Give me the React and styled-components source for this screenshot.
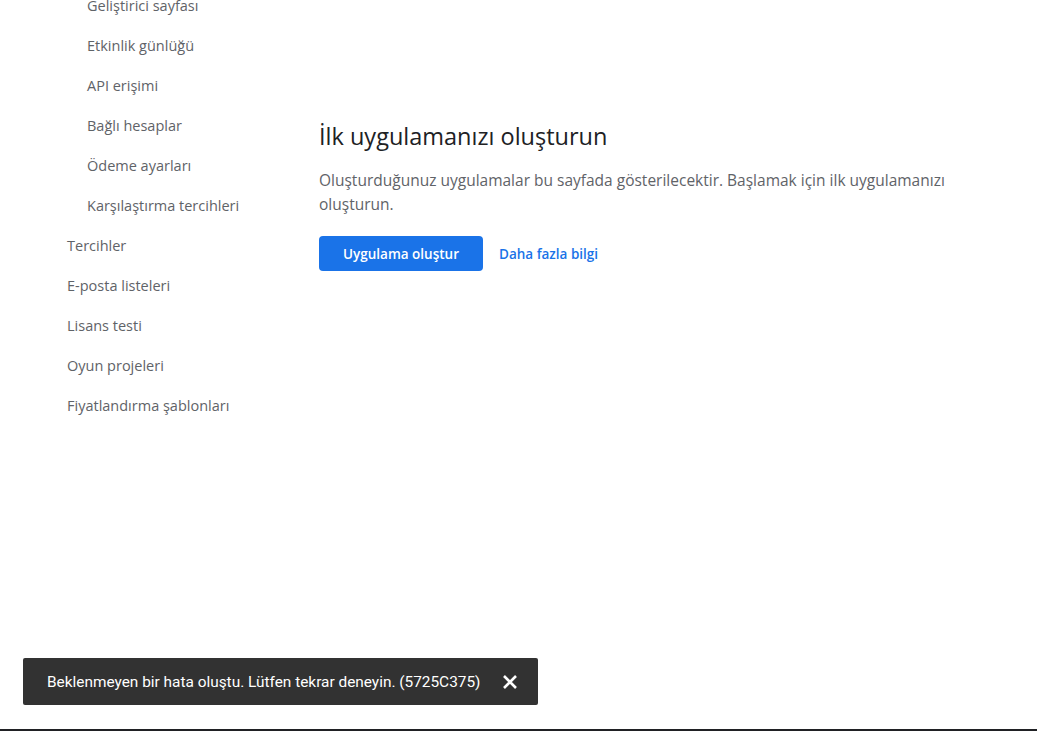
import React from 'react';
import styled, { createGlobalStyle } from 'styled-components';

const GlobalStyle = createGlobalStyle`
	html, body {
		margin: 0;
		padding: 0;
		background: #fff;
	}
	* {
		box-sizing: border-box;
	}
`;

const Page = styled.div`
	height: 731px;
	display: flex;
	overflow: hidden;
	border-bottom: 2px solid #202124;
	font-family: 'Open Sans', 'Liberation Sans', sans-serif;
`;

const Sidebar = styled.nav`
	width: 319px;
	flex-shrink: 0;
	padding-left: 67px;
	margin-top: -15px;
	display: flex;
	flex-direction: column;
`;

const NavItem = styled.a`
	height: 40px;
	display: flex;
	align-items: center;
	padding-left: ${(p) => (p.sub ? '20px' : '0')};
	font-size: 14.5px;
	font-weight: 500;
	color: #5f6368;
	text-decoration: none;
	cursor: pointer;
`;

const Main = styled.main`
	flex: 1;
	padding-top: 120px;
	padding-right: 60px;
`;

const Title = styled.h1`
	margin: 0;
	font-size: 23.5px;
	font-weight: 400;
	line-height: 32px;
	color: #202124;
`;

const Text = styled.p`
	margin: 16px 0 0;
	max-width: 650px;
	font-size: 15.5px;
	line-height: 24px;
	color: #5f6368;
`;

const Actions = styled.div`
	display: flex;
	align-items: center;
	gap: 16px;
	margin-top: 20px;
`;

const Button = styled.button`
	height: 35px;
	width: 164px;
	padding: 0;
	border: none;
	border-radius: 4px;
	background: #1a73e8;
	color: #fff;
	font-family: inherit;
	font-size: 13.5px;
	font-weight: 600;
	cursor: pointer;
`;

const TextLink = styled.a`
	font-size: 13.5px;
	font-weight: 600;
	color: #1a73e8;
	text-decoration: none;
	cursor: pointer;
`;

const Snackbar = styled.div`
	position: fixed;
	left: 23px;
	bottom: 26px;
	width: 515px;
	height: 47px;
	display: flex;
	align-items: center;
	justify-content: space-between;
	padding: 0 16px 0 24px;
	border-radius: 2px;
	background: #323232;
	color: #fff;
	font-family: Roboto, 'Liberation Sans', sans-serif;
	font-size: 15.4px;
`;

const Close = styled.button`
	display: flex;
	align-items: center;
	justify-content: center;
	width: 24px;
	height: 24px;
	padding: 0;
	border: none;
	background: none;
	cursor: pointer;
`;

const sections = [
	{ label: 'Geliştirici sayfası', sub: true },
	{ label: 'Etkinlik günlüğü', sub: true },
	{ label: 'API erişimi', sub: true },
	{ label: 'Bağlı hesaplar', sub: true },
	{ label: 'Ödeme ayarları', sub: true },
	{ label: 'Karşılaştırma tercihleri', sub: true },
	{ label: 'Tercihler' },
	{ label: 'E-posta listeleri' },
	{ label: 'Lisans testi' },
	{ label: 'Oyun projeleri' },
	{ label: 'Fiyatlandırma şablonları' },
];

const App = () => {
	return (
		<>
			<GlobalStyle />
			<Page>
				<Sidebar>
					{sections.map((s) => (
						<NavItem key={s.label} sub={s.sub ? 1 : 0}>
							{s.label}
						</NavItem>
					))}
				</Sidebar>
				<Main>
					<Title>İlk uygulamanızı oluşturun</Title>
					<Text>
						Oluşturduğunuz uygulamalar bu sayfada gösterilecektir. Başlamak için ilk
						uygulamanızı oluşturun.
					</Text>
					<Actions>
						<Button>Uygulama oluştur</Button>
						<TextLink>Daha fazla bilgi</TextLink>
					</Actions>
				</Main>
			</Page>
			<Snackbar>
				<span>Beklenmeyen bir hata oluştu. Lütfen tekrar deneyin. (5725C375)</span>
				<Close aria-label='Kapat'>
					<svg width='16' height='16' viewBox='0 0 16 16'>
						<path d='M2 2L14 14M14 2L2 14' stroke='#fff' strokeWidth='2.6' />
					</svg>
				</Close>
			</Snackbar>
		</>
	);
};

export default App;
